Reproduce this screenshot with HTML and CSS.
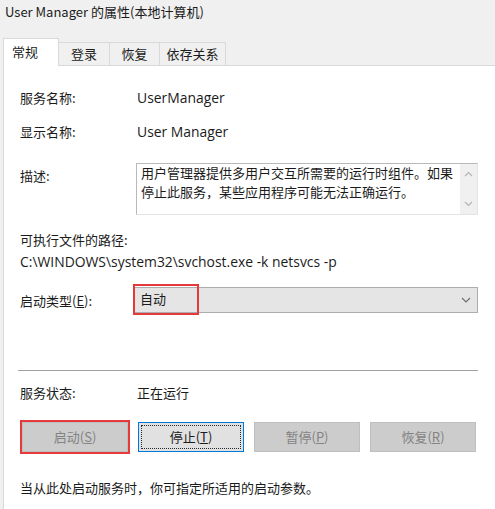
FILE: index.html
```html
<!DOCTYPE html>
<html lang="zh-CN">
<head>
  <meta charset="UTF-8" />
  <title>User Manager 的属性(本地计算机)</title>
  <link rel="stylesheet" href="styles.css">
</head>
<body>

  <div class="title">User Manager 的属性(本地计算机)</div>

  <div class="tabs">
    <div class="tab active">常规</div>
    <div class="tab w51">登录</div>
    <div class="tab w50">恢复</div>
    <div class="tab w66">依存关系</div>
  </div>

  <div class="panel">
    <div class="row first">
      <span class="label">服务名称:</span>
      <span class="latin">UserManager</span>
    </div>

    <div class="row gap14">
      <span class="label">显示名称:</span>
      <span class="latin">User Manager</span>
    </div>

    <div class="row desc-row">
      <span class="label desc-label">描述:</span>
      <div class="desc-box">
        <div class="desc-text">用户管理器提供多用户交互所需要的运行时组件。如果停止此服务，某些应用程序可能无法正确运行。</div>
        <div class="scrollbar">
          <svg width="9" height="6" viewBox="0 0 9 6"><path d="M1 5 L4.5 1.5 L8 5" fill="none" stroke="#b4b4b4" stroke-width="1.2"/></svg>
          <svg width="9" height="6" viewBox="0 0 9 6"><path d="M1 1 L4.5 4.5 L8 1" fill="none" stroke="#b4b4b4" stroke-width="1.2"/></svg>
        </div>
      </div>
    </div>

    <div class="block path-title">可执行文件的路径:</div>
    <div class="block latin path">C:\WINDOWS\system32\svchost.exe -k netsvcs -p</div>

    <div class="row start-row">
      <span class="label">启动类型(<u>E</u>):</span>
      <div class="select">
        <span class="select-value marked">自动</span>
        <svg class="chevron" width="10" height="6" viewBox="0 0 10 6"><path d="M1 1 L5 5 L9 1" fill="none" stroke="#707070" stroke-width="1.2"/></svg>
      </div>
    </div>

    <div class="separator"></div>

    <div class="row status-row">
      <span class="label">服务状态:</span>
      <span>正在运行</span>
    </div>

    <div class="buttons">
      <div class="btn disabled marked">启动(<u>S</u>)</div>
      <div class="btn focused"><span class="focus-ring">停止(<u>T</u>)</span></div>
      <div class="btn disabled">暂停(<u>P</u>)</div>
      <div class="btn disabled">恢复(<u>R</u>)</div>
    </div>

    <div class="block hint">当从此处启动服务时，你可指定所适用的启动参数。</div>
  </div>

</body>
</html>
```

FILE: styles.css
```css
html, body {
  margin: 0;
  padding: 0;
  overflow: hidden;
}

body {
  width: 495px;
  height: 509px;
  background-color: #f0f0f0;
  color: #1b1b1b;
  font-family: "Noto Sans CJK SC", "Noto Sans", sans-serif;
  font-size: 13px;
}

.title {
  padding: 3px 0 0 5px;
  height: 36px;
  line-height: 18px;
  box-sizing: border-box;
}

.tabs {
  display: flex;
  align-items: flex-end;
  margin-left: 3px;
  height: 29px;
}

.tab {
  height: 23px;
  line-height: 22px;
  text-align: center;
  box-sizing: border-box;
  border: 1px solid #d9d9d9;
  border-bottom: none;
  border-left: none;
  background-color: #f0f0f0;
}

.w51 { width: 51px; }
.w50 { width: 50px; }
.w66 { width: 66px; }

.tab.active {
  height: 28px;
  line-height: 26px;
  text-align: left;
  padding: 0 0 0 8px;
  border-left: 1px solid #d9d9d9;
  background-color: #ffffff;
  margin-bottom: -1px;
  width: 56px;
}

.panel {
  margin-left: 3px;
  height: 443px;
  border-top: 1px solid #d9d9d9;
  border-left: 1px solid #d9d9d9;
  background-color: #ffffff;
  padding-left: 16px;
}

.row {
  display: flex;
  align-items: center;
  line-height: 20px;
}

.label {
  width: 117px;
  flex-shrink: 0;
}

.latin {
  font-family: "Open Sans", "Noto Sans", sans-serif;
  font-size: 13.9px;
}

.row.first {
  padding-top: 22px;
}

.gap14 {
  margin-top: 14px;
}

.desc-row {
  margin-top: 21px;
  align-items: flex-start;
}

.desc-label {
  padding-top: 3px;
}

.desc-box {
  display: flex;
  width: 342px;
  height: 52px;
  margin-left: -1px;
  box-sizing: border-box;
  border: 1px solid #b9b9b9;
  border-right-color: #e4e4e4;
  border-bottom-color: #e4e4e4;
}

.desc-text {
  flex: 1;
  padding: 0 4px;
  margin-top: -1px;
  line-height: 19px;
}

.scrollbar {
  width: 17px;
  background-color: #f0f0f0;
  display: flex;
  flex-direction: column;
  justify-content: space-between;
  align-items: center;
  padding: 7px 0 7px;
}

.block {
  line-height: 20px;
}

.path-title {
  margin-top: 15px;
}

.path {
  margin-top: 2px;
}

.start-row {
  margin-top: 15px;
}

.start-row .label {
  padding-top: 2px;
}

.select {
  display: flex;
  align-items: center;
  justify-content: space-between;
  width: 344px;
  height: 26px;
  margin-left: -3px;
  box-sizing: border-box;
  border: 1px solid #adadad;
  background-color: #e5e5e5;
}

.select-value {
  width: 62px;
  height: 27px;
  line-height: 26px;
  padding-left: 5px;
  box-sizing: border-box;
  margin-top: -1px;
}

.chevron {
  margin-right: 6px;
}

.marked {
  outline: 2px solid #e53a3a;
}

.separator {
  margin: 57px 17px 0 -2px;
  border-top: 1px solid #a0a0a0;
}

.status-row {
  margin-top: 12px;
}

.buttons {
  display: flex;
  gap: 10px;
  margin-top: 19px;
  margin-left: 2px;
}

.btn {
  width: 106px;
  height: 30px;
  box-sizing: border-box;
  border: 1px solid #adadad;
  background-color: #e1e1e1;
  display: flex;
  align-items: center;
  justify-content: center;
  line-height: 20px;
}

.btn.disabled {
  background-color: #cccccc;
  border-color: #bfbfbf;
  color: #838383;
}

.btn.focused {
  border: 1px solid #0078d7;
  padding: 2px;
}

.focus-ring {
  display: flex;
  align-items: center;
  justify-content: center;
  width: 100%;
  height: 100%;
  box-sizing: border-box;
  border: 1px dotted #2a2a2a;
}

.hint {
  margin-top: 26px;
}
```
